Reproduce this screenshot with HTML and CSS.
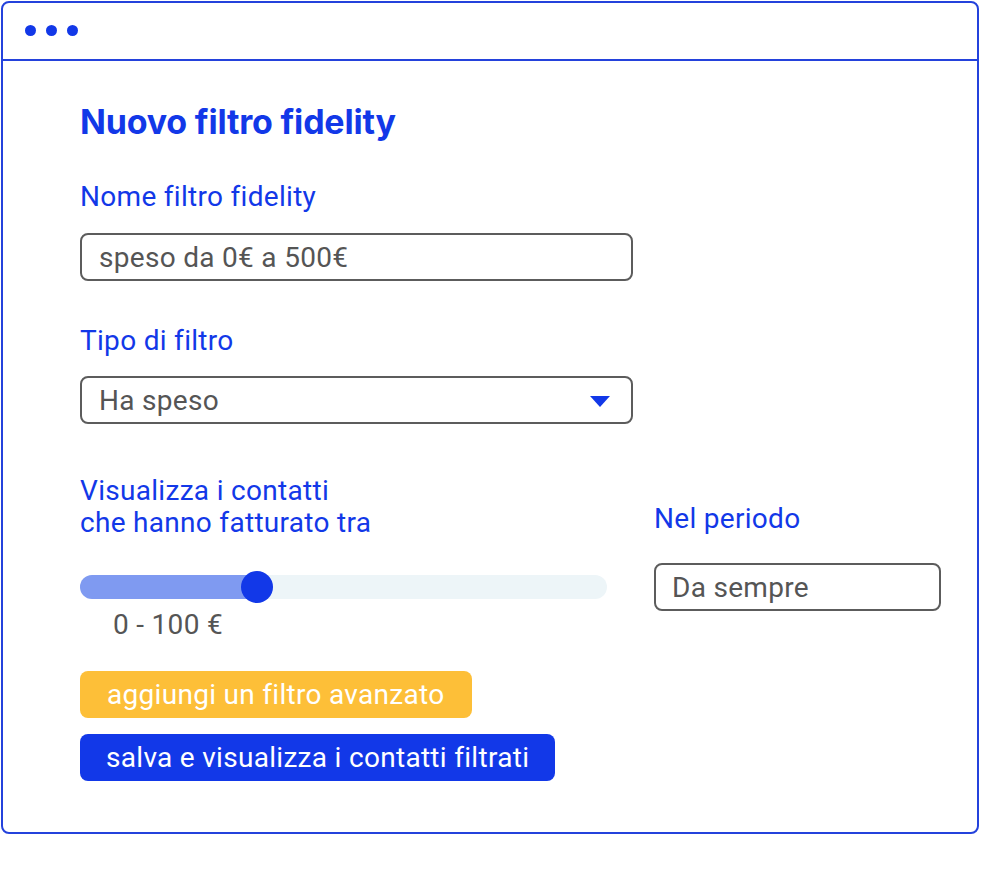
FILE: index.html
```html
<!DOCTYPE html>
<html lang="it">
<head>
<meta charset="utf-8">
<title>Nuovo filtro fidelity</title>
<link rel="stylesheet" href="styles.css">
</head>
<body>
<div class="window">
  <div class="titlebar">
    <span class="dot"></span><span class="dot"></span><span class="dot"></span>
  </div>
  <div class="content">
    <h1 class="title">Nuovo filtro fidelity</h1>

    <div class="label">Nome filtro fidelity</div>
    <div class="field field-wide">speso da 0€ a 500€</div>

    <div class="label label-gap">Tipo di filtro</div>
    <div class="field field-wide field-select">
      <span>Ha speso</span>
      <svg class="caret" width="20" height="11" viewBox="0 0 20 11"><polygon points="0,0 20,0 10,11" fill="#1238e8"/></svg>
    </div>

    <div class="split">
      <div class="col-left">
        <div class="label">Visualizza i contatti<br>che hanno fatturato tra</div>
        <div class="slider">
          <div class="track-fill"></div>
          <div class="thumb"></div>
        </div>
        <div class="range-value">0 - 100 €</div>
      </div>
      <div class="col-right">
        <div class="label">Nel periodo</div>
        <div class="field field-period">Da sempre</div>
      </div>
    </div>

    <div class="actions">
      <button class="btn btn-yellow">aggiungi un filtro avanzato</button>
      <button class="btn btn-blue">salva e visualizza i contatti filtrati</button>
    </div>
  </div>
</div>
</body>
</html>
```
FILE: styles.css
```css
* { box-sizing: border-box; }
html, body { margin: 0; padding: 0; background: #fff; }
body {
  font-family: Roboto, "Liberation Sans", sans-serif;
  font-variant-ligatures: none;
}

.window {
  margin: 1px 0 0 1px;
  width: 978px;
  height: 833px;
  border: 2px solid #2442dc;
  border-radius: 8px;
}

.titlebar {
  height: 58px;
  border-bottom: 2px solid #2442dc;
  display: flex;
  align-items: center;
  gap: 10px;
  padding-left: 22px;
  padding-bottom: 2px;
}
.dot {
  width: 11px;
  height: 11px;
  border-radius: 50%;
  background: #1238e8;
}

.content {
  padding-left: 77px;
}

.title {
  margin: 41px 0 39px;
  font-family: Inter, Lato, sans-serif;
  font-weight: 700;
  font-size: 34px;
  line-height: 40px;
  letter-spacing: -0.2px;
  color: #1238e8;
}

.label {
  font-size: 28px;
  line-height: 32px;
  letter-spacing: 0.3px;
  color: #1238e8;
}
.label-gap { margin-top: 44px; }

.field {
  margin-top: 20px;
  height: 48px;
  border: 2px solid #5c5c5c;
  border-radius: 8px;
  padding-left: 17px;
  display: flex;
  align-items: center;
  font-size: 28px;
  letter-spacing: 0.3px;
  color: #555;
}
.field-wide { width: 553px; }
.field-select {
  margin-top: 19px;
  justify-content: space-between;
  padding-right: 21px;
}
.caret { display: block; margin-top: 2px; }

.split {
  margin-top: 51px;
  display: flex;
  gap: 47px;
}
.col-left { width: 527px; }
.col-right { padding-top: 28px; }

.slider {
  margin-top: 36px;
  position: relative;
  height: 24px;
  border-radius: 12px;
  background: #edf5f8;
}
.track-fill {
  width: 180px;
  height: 24px;
  border-radius: 12px 0 0 12px;
  background: #7f9af1;
}
.thumb {
  position: absolute;
  left: 161px;
  top: -4px;
  width: 32px;
  height: 32px;
  border-radius: 50%;
  background: #1238e8;
}

.range-value {
  margin-top: 10px;
  padding-left: 33px;
  font-size: 28px;
  line-height: 32px;
  letter-spacing: 0.3px;
  color: #555;
}

.field-period {
  width: 287px;
  height: 48px;
  margin-top: 28px;
  padding-left: 16px;
}

.actions {
  margin-top: 30px;
  display: flex;
  flex-direction: column;
  align-items: flex-start;
  gap: 16px;
}
.btn {
  height: 47px;
  border: none;
  border-radius: 8px;
  font-family: Roboto, "Liberation Sans", sans-serif;
  font-variant-ligatures: none;
  font-size: 28px;
  letter-spacing: 0.3px;
  color: #fff;
  padding: 0 27px;
  cursor: pointer;
}
.btn-yellow { background: #fdbf38; }
.btn-blue { background: #1238e8; padding: 0 26px; }
```
